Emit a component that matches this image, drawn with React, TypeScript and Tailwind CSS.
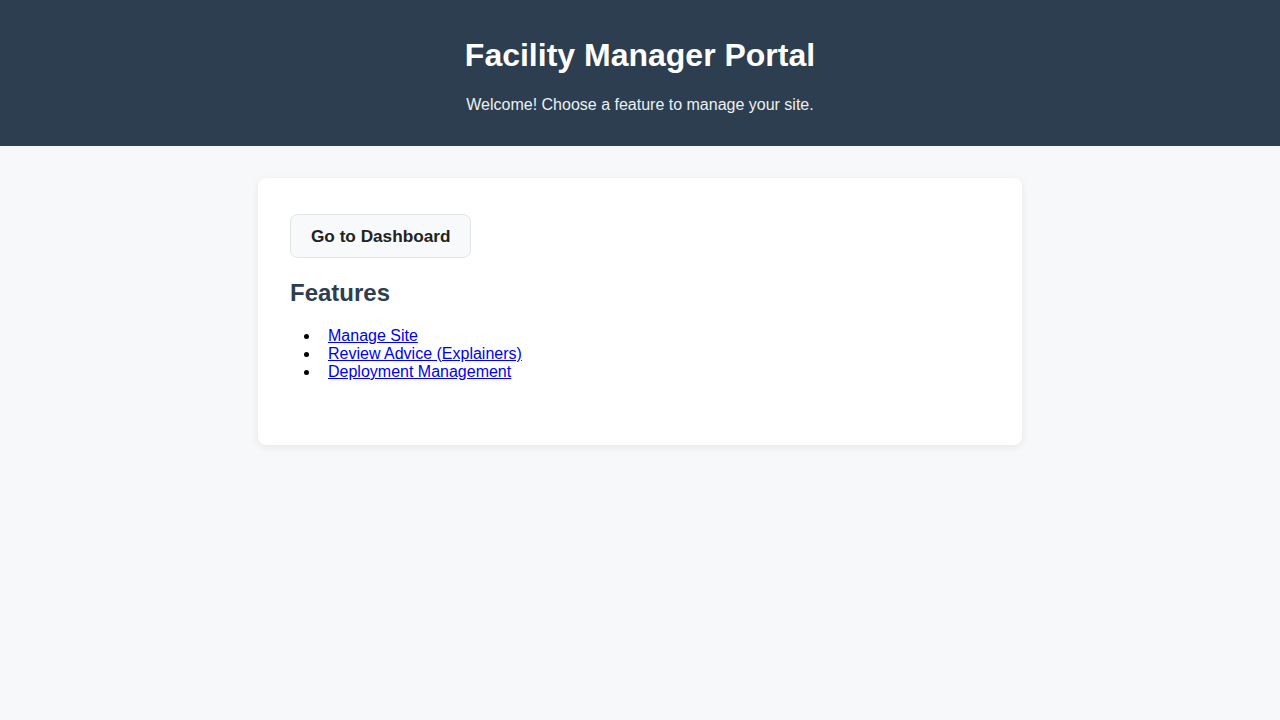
export default function App() {
  return (
    <div className="min-h-screen bg-[#f7f8fa] font-['Liberation_Sans',Arial,sans-serif] text-black">
      <header className="bg-[#2c3e50] pt-[36px] pb-[32px] text-center">
        <h1 className="text-[32px] leading-[38px] font-bold text-white">
          Facility Manager Portal
        </h1>
        <p className="mt-[22px] text-base leading-[18px] text-[#ecf0f1]">
          Welcome! Choose a feature to manage your site.
        </p>
      </header>

      <main className="pt-8 flex justify-center">
        <div className="w-[764px] bg-white rounded-lg shadow-[0_2px_8px_rgba(0,0,0,0.07)] px-8 pt-9 pb-[64px]">
          <button className="px-5 pt-[2px] h-[44px] bg-[#f8f9fa] border border-[#e3e5e8] rounded-lg text-[17.2px] font-bold text-[#222]">
            Go to Dashboard
          </button>
          <h2 className="mt-[21px] text-2xl leading-[28px] font-bold text-[#2c3e50]">
            Features
          </h2>
          <ul className="mt-[20px] list-disc pl-[30px] text-base leading-[18px]">
            <li className="pl-2">
              <a href="#" className="text-[#0000ee] underline">Manage Site</a>
            </li>
            <li className="pl-2">
              <a href="#" className="text-[#0000ee] underline">Review Advice (Explainers)</a>
            </li>
            <li className="pl-2">
              <a href="#" className="text-[#0000ee] underline">Deployment Management</a>
            </li>
          </ul>
        </div>
      </main>
    </div>
  );
}
